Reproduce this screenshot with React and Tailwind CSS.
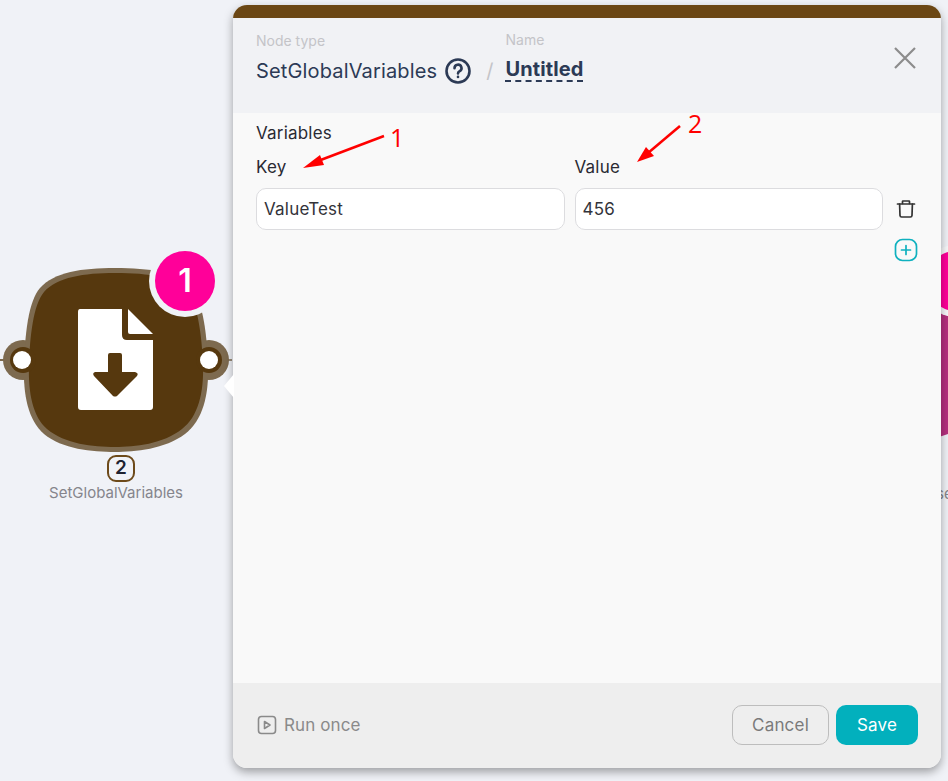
const font = { fontFamily: 'Inter, sans-serif' };

function NodeBlob() {
  return (
    <svg className="absolute left-0 top-[264px]" width="236" height="194" viewBox="0 264 236 194">
      {/* connector lips */}
      <line x1="0" y1="360" x2="6" y2="360" stroke="#7d6a4f" strokeWidth="2" />
      <line x1="226" y1="360" x2="232" y2="360" stroke="#7d6a4f" strokeWidth="1.5" />
      <circle cx="23" cy="360" r="20" fill="#7d6a4f" />
      <circle cx="209" cy="360" r="20" fill="#7d6a4f" />
      <path d="M115 268 C150 268 178 272 192 288 C203 302 207 335 208 365 C209 395 203 420 185 434 C165 449 135 452 115 452 C92 452 62 449 44 434 C28 420 23 395 24 365 C25 335 28 302 40 288 C54 272 82 268 115 268 Z" fill="#7d6a4f" />
      <path d="M115 273 C150 273 175 277 188 292 C198 305 202 337 203 365 C204 393 198 417 182 429 C163 444 135 447 115 447 C93 447 65 444 47 429 C33 417 28 393 29 365 C30 337 33 305 44 292 C57 277 84 273 115 273 Z" fill="#56380e" />
      <circle cx="23" cy="360" r="13" fill="#56380e" />
      <circle cx="209" cy="360" r="13" fill="#56380e" />
      <circle cx="22" cy="360" r="9" fill="#ffffff" />
      <circle cx="209" cy="360" r="9" fill="#ffffff" />
      {/* file with download arrow */}
      <path d="M80 309 H122 V335 Q122 340 127 340 H153 V407 Q153 410 150 410 H81 Q78 410 78 407 V312 Q78 309 80 309 Z" fill="#ffffff" />
      <path d="M128 309 L153 334 H130 Q128 334 128 332 Z" fill="#ffffff" />
      <path d="M110 353 H120 Q122 353 122 355 V372 H135 Q139 373 137 376 L117 396 Q115 397 113 396 L94 376 Q92 373 95 372 H108 V355 Q108 353 110 353 Z" fill="#56380e" />
    </svg>
  );
}

function SectionLabel({ children, className }) {
  return <div className={`text-[17px] leading-[20px] tracking-[0.2px] text-[#2a2a33] ${className}`}>{children}</div>;
}

function Field({ value }) {
  return (
    <div className="flex-1 h-[42px] flex items-center px-[7px] pt-[1px] bg-white border border-[#dcdcdf] rounded-[10px] text-[17px] tracking-[0.2px] text-[#33333a]">
      {value}
    </div>
  );
}

export default function App() {
  return (
    <div style={font} className="relative w-full h-[781px] overflow-hidden bg-[#f0f2f7]">
      {/* canvas: node */}
      <NodeBlob />
      <div className="absolute left-[149px] top-[245px] w-[72px] h-[72px] rounded-full bg-[#f0f2f7] flex items-center justify-center">
        <div className="w-[60px] h-[60px] rounded-full bg-[#ff0099] flex items-center justify-center text-white text-[32px] font-semibold">1</div>
      </div>
      <div className="absolute left-[107px] top-[455px] w-[28px] h-[27px] border-2 border-[#6d4a1a] rounded-[9px] bg-[#f0f2f7] flex items-center justify-center text-[19px] font-semibold text-[#1e2230]">2</div>
      <div className="absolute left-0 top-[484px] w-[232px] text-center text-[15px] leading-[18px] text-[#85858c]">SetGlobalVariables</div>

      {/* next node, behind the panel */}
      <svg className="absolute left-[930px] top-[245px]" width="18" height="200" viewBox="930 245 18 200">
        <path d="M930 252 H948 V434 L930 440 Z" fill="#b5307e" />
        <circle cx="956" cy="281" r="36" fill="#f7f8fa" />
        <circle cx="956" cy="281" r="30" fill="#ff0099" />
      </svg>
      <div className="absolute left-[936px] top-[485px] text-[15px] leading-[18px] text-[#85858c]">se</div>

      {/* config panel */}
      <div className="absolute left-[233px] top-[5px] w-[708px] h-[763px] flex flex-col rounded-[14px] overflow-hidden shadow-[0_4px_10px_rgba(0,0,0,0.35)] bg-[#f9f9f9]">
        <div className="h-[13px] bg-[#6b4714] shrink-0" />
        <div className="h-[95px] shrink-0 bg-[#f1f2f5] flex items-start pl-[23px] pr-[25px]">
          <div className="pt-[15px]">
            <div className="text-[14px] leading-[16px] text-[#c4c4c8]">Node type</div>
            <div className="flex items-center mt-[7px] h-[30px]">
              <span className="text-[20px] tracking-[0.15px] text-[#2c3a55]">SetGlobalVariables</span>
              <svg className="ml-[8px]" width="26" height="26" viewBox="0 0 26 26" fill="none" stroke="#2c3a55" strokeWidth="2.6" strokeLinecap="round">
                <circle cx="13" cy="13" r="11.5" />
                <path d="M9.5 10.2a3.5 3.5 0 1 1 5.2 3c-1 .6-1.7 1.2-1.7 2.3" />
                <path d="M13 18.9v.1" />
              </svg>
              <span className="ml-[15px] text-[20px] text-[#c4c4c8]">/</span>
            </div>
          </div>
          <div className="pt-[14px] ml-[12px]">
            <div className="text-[14px] leading-[16px] text-[#c4c4c8]">Name</div>
            <div className="mt-[7px] h-[30px] flex items-center">
              <span className="text-[20px] font-bold tracking-[0.1px] text-[#2c3a55] border-b-2 border-dashed border-[#2c3a55] leading-[22px]">Untitled</span>
            </div>
          </div>
          <svg className="ml-auto mt-[28px]" width="24" height="24" viewBox="0 0 24 24" fill="none" stroke="#8c8c8c" strokeWidth="2.2">
            <path d="M3 2 L23 22 M23 2 L3 22" />
          </svg>
        </div>

        <div className="flex-1 pl-[23px] pr-[23px]">
          <SectionLabel className="mt-[10px]">Variables</SectionLabel>
          <div className="flex gap-[10px] mt-[14px] pr-[35px]">
            <SectionLabel className="flex-1 text-[#1f1f26]">Key</SectionLabel>
            <SectionLabel className="flex-1 text-[#1f1f26]">Value</SectionLabel>
          </div>
          <div className="flex items-center mt-[11px]">
            <div className="flex-1 flex gap-[10px]">
              <Field value="ValueTest" />
              <Field value="456" />
            </div>
            <div className="w-[35px] flex justify-end pr-[2px]">
              <svg width="20" height="20" viewBox="0 0 20 20" fill="none" stroke="#333333" strokeWidth="1.7" strokeLinejoin="round" strokeLinecap="round">
                <path d="M1.5 5 H18.5" />
                <path d="M6.5 4.5 V2.5 Q6.5 2 7 2 H13 Q13.5 2 13.5 2.5 V4.5" />
                <path d="M3.6 5 L4 16.5 Q4.1 18 5.6 18 H14.4 Q15.9 18 16 16.5 L16.4 5" />
              </svg>
            </div>
          </div>
          <div className="flex justify-end mt-[8px]">
            <svg width="24" height="24" viewBox="0 0 24 24" fill="none" stroke="#0fb1bf" strokeWidth="1.7" strokeLinecap="round">
              <rect x="1.5" y="1.5" width="21" height="21" rx="7" />
              <path d="M12 7.5 V16.5 M7.5 12 H16.5" />
            </svg>
          </div>
        </div>

        <div className="h-[85px] shrink-0 bg-[#eeeeee] flex items-center pl-[24px] pr-[23px] pb-[2px]">
          <svg width="20" height="20" viewBox="0 0 20 20" fill="none" stroke="#8a8a8a" strokeWidth="1.6" strokeLinejoin="round">
            <rect x="1.5" y="1.5" width="17" height="17" rx="3" />
            <path d="M7.5 6.5 L13 10 L7.5 13.5 Z" />
          </svg>
          <span className="ml-[7px] pt-[2px] text-[17px] tracking-[0.1px] text-[#8a8a8a]">Run once</span>
          <button className="ml-auto w-[97px] h-[40px] pt-[2px] rounded-[10px] border border-[#bdbdbd] text-[17px] tracking-[0.2px] text-[#7a7a7a]">Cancel</button>
          <button className="ml-[7px] w-[82px] h-[40px] pt-[2px] rounded-[10px] bg-[#02b0bd] text-[17px] tracking-[0.2px] text-white">Save</button>
        </div>
      </div>

      {/* panel pointer */}
      <svg className="absolute left-[223px] top-[374px]" width="11" height="24" viewBox="0 0 11 24">
        <path d="M11 0 L1 12 L11 24 Z" fill="#ffffff" />
      </svg>

      {/* annotation arrows */}
      <svg className="absolute inset-0 pointer-events-none" width="948" height="781" viewBox="0 0 948 781">
        <path d="M384 136 L318 161" stroke="#ff0000" strokeWidth="2.5" />
        <path d="M303 168 L320 155 L324 165 Z" fill="#ff0000" />
        <path d="M680 126 L648 153" stroke="#ff0000" strokeWidth="2.5" />
        <path d="M637 162 L646 147 L654 156 Z" fill="#ff0000" />
      </svg>
      <div className="absolute left-[390px] top-[122px] text-[25px] leading-[30px] text-[#ff0000]" style={{ fontFamily: '"Open Sans", sans-serif' }}>1</div>
      <div className="absolute left-[688px] top-[108px] text-[25px] leading-[30px] text-[#ff0000]" style={{ fontFamily: '"Open Sans", sans-serif' }}>2</div>
    </div>
  );
}
